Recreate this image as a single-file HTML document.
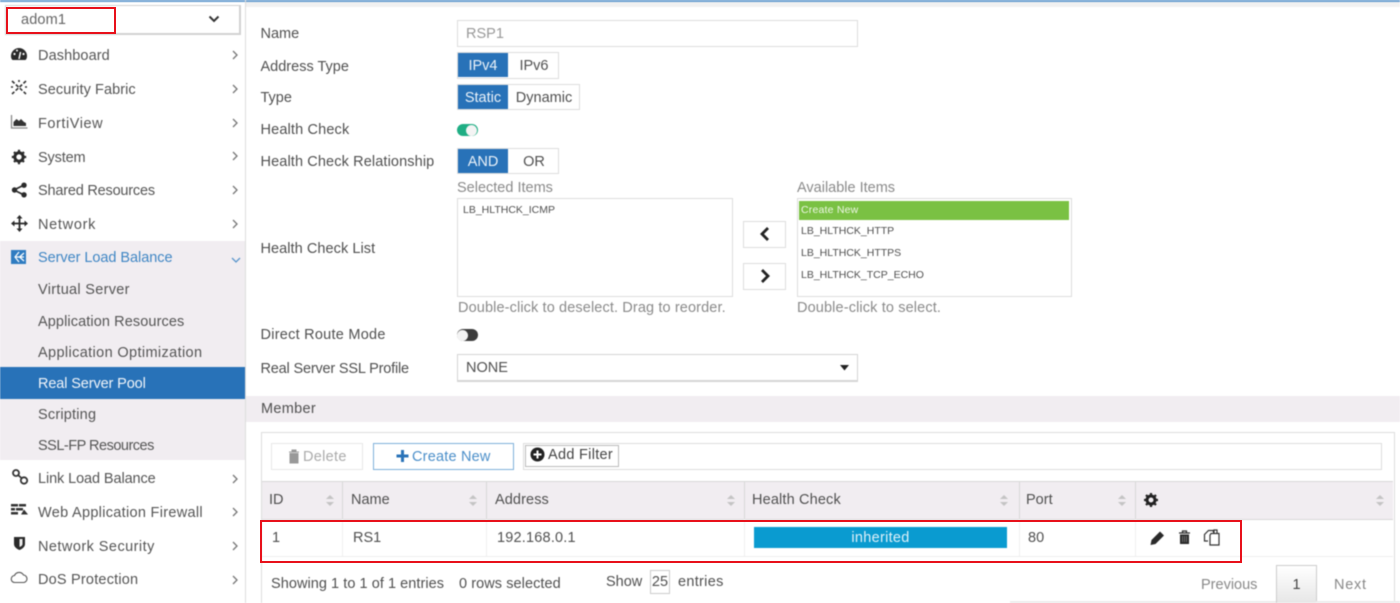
<!DOCTYPE html>
<html><head><meta charset="utf-8"><style>
html,body{margin:0;padding:0;width:1400px;height:603px;overflow:hidden;background:#fff}
#p{position:absolute;left:0;top:0;width:1400px;height:603px;overflow:hidden;font-family:"Liberation Sans",sans-serif;font-size:14.5px;color:#505050;filter:blur(.4px)}
#p div,#p svg{position:absolute}
.t{white-space:nowrap;line-height:18px}
.m{color:#555;left:38px}
.c{text-align:center}
.r{position:absolute;border:2px solid #e8101a;box-sizing:border-box}
</style></head><body><div id="p">
<div style="left:-2px;top:0;width:1404px;height:2px;background:#6a9fd0"></div>
<div style="left:246px;top:2px;width:1156px;height:5px;background:#f1f1f1"></div>
<div style="left:245px;top:0;width:1px;height:605px;background:#ddd"></div>

<!-- sidebar -->
<div style="left:5px;top:5px;width:233px;height:27px;border:1px solid #d2d2d2;border-bottom-width:2px;border-right-width:2px"></div>
<div class="t" style="left:21px;top:11px;color:#666;letter-spacing:.15px">adom1</div>
<svg style="left:208px;top:15px" width="12" height="8"><path d="M1.500 1.500L6 6l4.500-4.500" fill="none" stroke="#333" stroke-width="2"/></svg>
<div style="left:-2px;top:241px;width:247px;height:219px;background:#f1edf1"></div>
<div style="left:-2px;top:367px;width:247px;height:32px;background:#2872b8"></div>

<div class="t m" style="top:47px;letter-spacing:.1px">Dashboard</div>
<div class="t m" style="top:81px;letter-spacing:.07px">Security Fabric</div>
<div class="t m" style="top:115px;letter-spacing:.55px">FortiView</div>
<div class="t m" style="top:149px;letter-spacing:-.15px">System</div>
<div class="t m" style="top:182px;letter-spacing:-.2px">Shared Resources</div>
<div class="t m" style="top:216px;letter-spacing:.7px">Network</div>
<div class="t m" style="top:249px;color:#3f86c4;letter-spacing:-.05px">Server Load Balance</div>
<div class="t m" style="top:281px;letter-spacing:.3px">Virtual Server</div>
<div class="t m" style="top:313px;letter-spacing:.1px">Application Resources</div>
<div class="t m" style="top:344px;letter-spacing:.37px">Application Optimization</div>
<div class="t m" style="top:375px;color:#f1f5fa;letter-spacing:-.12px">Real Server Pool</div>
<div class="t m" style="top:406px;letter-spacing:.2px">Scripting</div>
<div class="t m" style="top:437px;letter-spacing:-.5px">SSL-FP Resources</div>
<div class="t m" style="top:470px;letter-spacing:-.1px">Link Load Balance</div>
<div class="t m" style="top:504px;letter-spacing:.3px">Web Application Firewall</div>
<div class="t m" style="top:538px;letter-spacing:.45px">Network Security</div>
<div class="t m" style="top:571px;letter-spacing:.2px">DoS Protection</div>

<!-- chevrons -->
<svg style="left:230px;top:48px" width="12" height="540" fill="none" stroke="#777" stroke-width="1.300">
<path d="M3 3l4 4-4 4"/><path d="M3 37l4 4-4 4"/><path d="M3 71l4 4-4 4"/><path d="M3 104l4 4-4 4"/><path d="M3 138l4 4-4 4"/><path d="M3 172l4 4-4 4"/>
<path d="M2 210l4 4 4-4" stroke="#5b96cc"/>
<path d="M3 427l4 4-4 4"/><path d="M3 460l4 4-4 4"/><path d="M3 494l4 4-4 4"/><path d="M3 528l4 4-4 4"/>
</svg>

<!-- sidebar icons -->
<svg style="left:10px;top:46px" width="20" height="16"><path d="M1 10a8 8 0 0 1 16 0c0 2-.5 3-1.500 4H2.500C1.500 13 1 12 1 10z" fill="#2a2a2a"/><path d="M9 13l1.500-7" stroke="#fff" stroke-width="1.500"/><circle cx="4.500" cy="8" r="1.100" fill="#fff"/><circle cx="13.500" cy="8" r="1.100" fill="#fff"/><circle cx="7" cy="4.500" r="1" fill="#fff"/></svg>
<svg style="left:10px;top:79px" width="20" height="18" stroke="#333" stroke-width="1.600" stroke-dasharray="3.500 1.800" fill="none"><path d="M2 2l14 13M16 2L2 15M9 1v2M1 8h2M15 8h2"/></svg>
<svg style="left:10px;top:114px" width="19" height="16"><path d="M1.500 1v13h16" fill="none" stroke="#888" stroke-width="1.300"/><path d="M3.500 12V8l3-3 2.500 2 2-2 3 3 2 1v3z" fill="#333"/></svg>
<svg style="left:11px;top:149px" width="16" height="16" fill="none"><circle cx="8" cy="8" r="4.200" stroke="#2a2a2a" stroke-width="3"/><path d="M8 .8v3M8 12v3.200M.8 8h3M12 8h3.200M3 3l2 2M11 11l2 2M13 3l-2 2M3 13l2-2" stroke="#2a2a2a" stroke-width="2.200"/></svg>
<svg style="left:11px;top:182px" width="16" height="16"><path d="M3 8l10-5M3 8l10 5" stroke="#2a2a2a" stroke-width="1.600"/><circle cx="3.500" cy="8" r="2.700" fill="#2a2a2a"/><circle cx="13" cy="3.200" r="2.700" fill="#2a2a2a"/><circle cx="13" cy="12.800" r="2.700" fill="#2a2a2a"/></svg>
<svg style="left:11px;top:215px" width="17" height="17" fill="#2a2a2a"><path d="M8.500 3v11M3 8.500h11" stroke="#2a2a2a" stroke-width="1.800"/><path d="M8.500 0l3 3.500h-6zM8.500 17l3-3.500h-6zM0 8.500l3.500-3v6zM17 8.500l-3.500-3v6z"/></svg>
<svg style="left:11px;top:250px" width="16" height="15"><rect width="15" height="14" fill="#2f7cc1"/><path d="M8 2L4 7l4 5M13 3L8.500 7 13 11M5 7h8" fill="none" stroke="#fff" stroke-width="1.200"/></svg>
<svg style="left:11px;top:468px" width="18" height="18" fill="none" stroke="#333" stroke-width="1.800"><circle cx="5" cy="5" r="3"/><circle cx="13" cy="12.500" r="3.200"/><path d="M7 7l4 3.500"/></svg>
<svg style="left:11px;top:503px" width="18" height="14" fill="#333"><rect x="0" y="1" width="7" height="2.500"/><rect x="8" y="1" width="7" height="2.500"/><rect x="0" y="5" width="4" height="2.500"/><rect x="5" y="5" width="7" height="2.500"/><rect x="0" y="9" width="7" height="2.500"/><path d="M10 11.500l3-5 4 5z"/></svg>
<svg style="left:13px;top:536px" width="14" height="15"><path d="M1 1h11v7c0 3-3 5-5.500 6C4 13 1 11 1 8z" fill="#2a2a2a"/><path d="M6.500 3h3v5c0 1.500-1.500 2.500-3 3z" fill="#eee"/></svg>
<svg style="left:10px;top:570px" width="19" height="14"><path d="M5 12.500a3.500 3.500 0 0 1-.5-7A5 5 0 0 1 13.500 5a3.800 3.800 0 0 1 .5 7.500z" fill="none" stroke="#555" stroke-width="1.100"/></svg>

<!-- form labels -->
<div class="t" style="left:260.500px;top:25px">Name</div>
<div class="t" style="left:260.500px;top:58px">Address Type</div>
<div class="t" style="left:260.500px;top:89px">Type</div>
<div class="t" style="left:260.500px;top:121px;letter-spacing:.15px">Health Check</div>
<div class="t" style="left:260.500px;top:153px;letter-spacing:.12px">Health Check Relationship</div>
<div class="t" style="left:260.500px;top:240px;letter-spacing:.06px">Health Check List</div>
<div class="t" style="left:260.500px;top:326px;letter-spacing:.25px">Direct Route Mode</div>
<div class="t" style="left:260.500px;top:360px;letter-spacing:-.18px">Real Server SSL Profile</div>

<div style="left:457px;top:20px;width:399px;height:25px;border:1px solid #ddd"></div>
<div class="t" style="left:466px;top:25px;color:#999">RSP1</div>

<!-- segments -->
<div style="left:457px;top:52px;width:100px;height:25px;border:1px solid #ddd"></div>
<div class="t c" style="left:458px;top:53px;width:50px;height:24px;line-height:26px;background:#2872b8;color:#eaf2f9">IPv4</div>
<div class="t c" style="left:509px;top:53px;width:50px;line-height:26px">IPv6</div>
<div style="left:457px;top:84px;width:121px;height:24px;border:1px solid #ddd"></div>
<div class="t c" style="left:458px;top:85px;width:50px;height:24px;line-height:26px;background:#2872b8;color:#eaf2f9">Static</div>
<div class="t c" style="left:509px;top:85px;width:70px;line-height:26px">Dynamic</div>
<div style="left:457px;top:148px;width:100px;height:24px;border:1px solid #ddd"></div>
<div class="t c" style="left:458px;top:149px;width:50px;height:24px;line-height:26px;background:#2872b8;color:#eaf2f9">AND</div>
<div class="t c" style="left:509px;top:149px;width:50px;line-height:26px">OR</div>

<!-- toggles -->
<div style="left:457px;top:124px;width:21px;height:12px;border-radius:6px;background:#1fae84"></div>
<div style="left:466px;top:124.500px;width:11px;height:11px;border-radius:6px;background:#f4f4f4"></div>
<div style="left:457px;top:329px;width:21px;height:12px;border-radius:6px;background:#3c3c3c"></div>
<div style="left:457px;top:329.500px;width:11px;height:11px;border-radius:6px;background:#f4f4f4"></div>

<!-- dual list -->
<div class="t" style="left:457px;top:179px;color:#8a8a8a">Selected Items</div>
<div class="t" style="left:797px;top:179px;color:#8a8a8a">Available Items</div>
<div style="left:457px;top:198px;width:274px;height:97px;border:1px solid #ddd"></div>
<div style="left:797px;top:198px;width:273px;height:97px;border:1px solid #ddd"></div>
<div class="t" style="left:463px;top:201px;font-size:10.500px">LB_HLTHCK_ICMP</div>
<div class="t" style="left:799px;top:201px;width:270px;height:19px;background:#7ac143;color:#eef7e6;font-size:10.500px;text-indent:2px;letter-spacing:.2px">Create New</div>
<div class="t" style="left:801px;top:222px;font-size:10.500px">LB_HLTHCK_HTTP</div>
<div class="t" style="left:801px;top:244px;font-size:10.500px">LB_HLTHCK_HTTPS</div>
<div class="t" style="left:801px;top:266px;font-size:10.500px">LB_HLTHCK_TCP_ECHO</div>
<div style="left:743px;top:221px;width:41px;height:25px;border:1px solid #ddd"></div>
<div style="left:743px;top:263px;width:41px;height:25px;border:1px solid #ddd"></div>
<svg style="left:759px;top:226px" width="12" height="16"><path d="M9 2L3 8l6 6" fill="none" stroke="#222" stroke-width="2.800"/></svg>
<svg style="left:759px;top:268px" width="12" height="16"><path d="M3 2l6 6-6 6" fill="none" stroke="#222" stroke-width="2.800"/></svg>
<div class="t" style="left:458px;top:299px;color:#8a8a8a;letter-spacing:.12px">Double-click to deselect. Drag to reorder.</div>
<div class="t" style="left:797px;top:299px;color:#8a8a8a;letter-spacing:.13px">Double-click to select.</div>

<!-- select -->
<div style="left:457px;top:354px;width:399px;height:25px;border:1px solid #d5d5d5;border-bottom-width:2px"></div>
<div class="t" style="left:466px;top:359px">NONE</div>
<svg style="left:840px;top:365px" width="10" height="6"><path d="M0 0h9L4.500 5.500z" fill="#222"/></svg>

<!-- member -->
<div style="left:246px;top:396px;width:1156px;height:26px;background:#f1edf1"></div>
<div class="t" style="left:261px;top:400px;letter-spacing:.3px">Member</div>
<div style="left:261px;top:432px;width:1132px;height:180px;border:1px solid #ddd"></div>

<div style="left:271px;top:443px;width:90px;height:25px;border:1px solid #e8e8e8"></div>
<svg style="left:288px;top:449px" width="12" height="15"><path d="M1 3h10M4 3V1h4v2M2 4.500h8V14H2z" fill="#999" stroke="#999"/></svg>
<div class="t" style="left:303px;top:448px;color:#aaa;letter-spacing:.3px">Delete</div>
<div style="left:373px;top:443px;width:139px;height:25px;border:1px solid #7fb0da"></div>
<svg style="left:396px;top:449px" width="14" height="14"><path d="M6.500 1v12M.5 7h12" stroke="#2a73b8" stroke-width="3"/></svg>
<div class="t" style="left:412px;top:448px;color:#4a8ec9;letter-spacing:.2px">Create New</div>
<div style="left:523px;top:443px;width:857px;height:25px;border:1px solid #ddd"></div>
<div style="left:525px;top:445px;width:92px;height:20px;border:1px solid #bbb"></div>
<svg style="left:530px;top:447px" width="15" height="15"><circle cx="7.500" cy="7.500" r="7" fill="#222"/><path d="M7.500 3.500v8M3.500 7.500h8" stroke="#fff" stroke-width="2"/></svg>
<div class="t" style="left:548px;top:446px;color:#444;letter-spacing:.3px">Add Filter</div>

<!-- table head -->
<div style="left:262px;top:481px;width:1131px;height:37px;background:#f1edf1;border-top:1px solid #d8d8d8;border-bottom:1px solid #d8d8d8"></div>
<div style="left:342px;top:482px;width:1px;height:37px;background:#d8d8d8"></div>
<div style="left:486px;top:482px;width:1px;height:37px;background:#d8d8d8"></div>
<div style="left:744px;top:482px;width:1px;height:37px;background:#d8d8d8"></div>
<div style="left:1019px;top:482px;width:1px;height:37px;background:#d8d8d8"></div>
<div style="left:1135px;top:482px;width:1px;height:37px;background:#d8d8d8"></div>
<div style="left:342px;top:519px;width:1px;height:38px;background:#f0f0f0"></div>
<div style="left:486px;top:519px;width:1px;height:38px;background:#f0f0f0"></div>
<div style="left:744px;top:519px;width:1px;height:38px;background:#f0f0f0"></div>
<div style="left:1019px;top:519px;width:1px;height:38px;background:#f0f0f0"></div>
<div style="left:1135px;top:519px;width:1px;height:38px;background:#f0f0f0"></div>
<div style="left:262px;top:556px;width:1131px;height:1px;background:#eee"></div>

<div class="t" style="left:269px;top:491px">ID</div>
<div class="t" style="left:351px;top:491px">Name</div>
<div class="t" style="left:495px;top:491px;letter-spacing:.1px">Address</div>
<div class="t" style="left:752px;top:491px;letter-spacing:.15px">Health Check</div>
<div class="t" style="left:1026px;top:491px">Port</div>
<svg style="left:1143px;top:492px" width="16" height="16" fill="none"><circle cx="8" cy="8" r="4" stroke="#222" stroke-width="3"/><path d="M8 1v3M8 12v3M1 8h3M12 8h3M3 3l2 2M11 11l2 2M13 3l-2 2M3 13l2-2" stroke="#222" stroke-width="2.200"/></svg>
<svg style="left:326px;top:494px" width="1064" height="13" fill="#c4c4c4">
<path d="M0 5l4-4 4 4zM0 8l4 4 4-4z"/>
<path d="M143 5l4-4 4 4zM143 8l4 4 4-4z"/>
<path d="M401 5l4-4 4 4zM401 8l4 4 4-4z"/>
<path d="M674 5l4-4 4 4zM674 8l4 4 4-4z"/>
<path d="M792 5l4-4 4 4zM792 8l4 4 4-4z"/>
<path d="M1050 5l4-4 4 4zM1050 8l4 4 4-4z"/>
</svg>

<!-- row -->
<div class="t" style="left:272px;top:529px">1</div>
<div class="t" style="left:353px;top:529px">RS1</div>
<div class="t" style="left:497px;top:529px;letter-spacing:.2px">192.168.0.1</div>
<div class="t c" style="left:754px;top:527px;width:253px;height:21px;line-height:22px;background:#0a9bd0;color:#dff1f9;letter-spacing:.3px">inherited</div>
<div class="t" style="left:1028px;top:529px">80</div>
<svg style="left:1149px;top:530px" width="17" height="16"><path d="M1.500 15l1-5L11 1.500l4 4L6.500 14z" fill="#2a2a2a"/></svg>
<svg style="left:1178px;top:530px" width="13" height="15"><path d="M1 3h11M4.500 3V1h4v2" fill="none" stroke="#2a2a2a" stroke-width="1.200"/><path d="M2 4.500h9V14H2z" fill="#2a2a2a"/><path d="M4.500 6v6M6.500 6v6M8.500 6v6" stroke="#888" stroke-width=".7"/></svg>
<svg style="left:1203px;top:529px" width="19" height="18" fill="none" stroke="#333" stroke-width="1.200"><path d="M5 12H1.500V5.500l4-4H10l1 3"/><path d="M8 4.500h3l5 0V16H7V6z" fill="#fff"/><path d="M11 5V1h3v4"/></svg>

<!-- footer -->
<div class="t" style="left:271px;top:575px;letter-spacing:.05px">Showing 1 to 1 of 1 entries</div>
<div class="t" style="left:459px;top:575px;letter-spacing:.07px">0 rows selected</div>
<div class="t" style="left:606px;top:573px">Show</div>
<div class="c" style="left:650px;top:570px;width:18px;height:22px;border:1px solid #ccc;line-height:22px">25</div>
<div class="t" style="left:678px;top:573px;letter-spacing:.3px">entries</div>
<div class="t" style="left:1201px;top:576px;color:#888">Previous</div>
<div class="c" style="left:1276px;top:565px;width:39px;height:38px;border:1px solid #ccc;line-height:38px;background:linear-gradient(#fff,#e6e6e6);color:#444">1</div>
<div class="t" style="left:1334px;top:576px;color:#888;letter-spacing:.75px">Next</div>
<div style="left:1010px;top:601px;width:266px;height:4px;background:#ececec"></div>
<div style="left:1316px;top:601px;width:86px;height:4px;background:#ececec"></div>
</div>
<!-- red outlines, outside the blur so they stay saturated -->
<div class="r" style="left:6px;top:7px;width:110px;height:27px"></div>
<div class="r" style="left:260px;top:520px;width:982px;height:43px"></div>
</body></html>
